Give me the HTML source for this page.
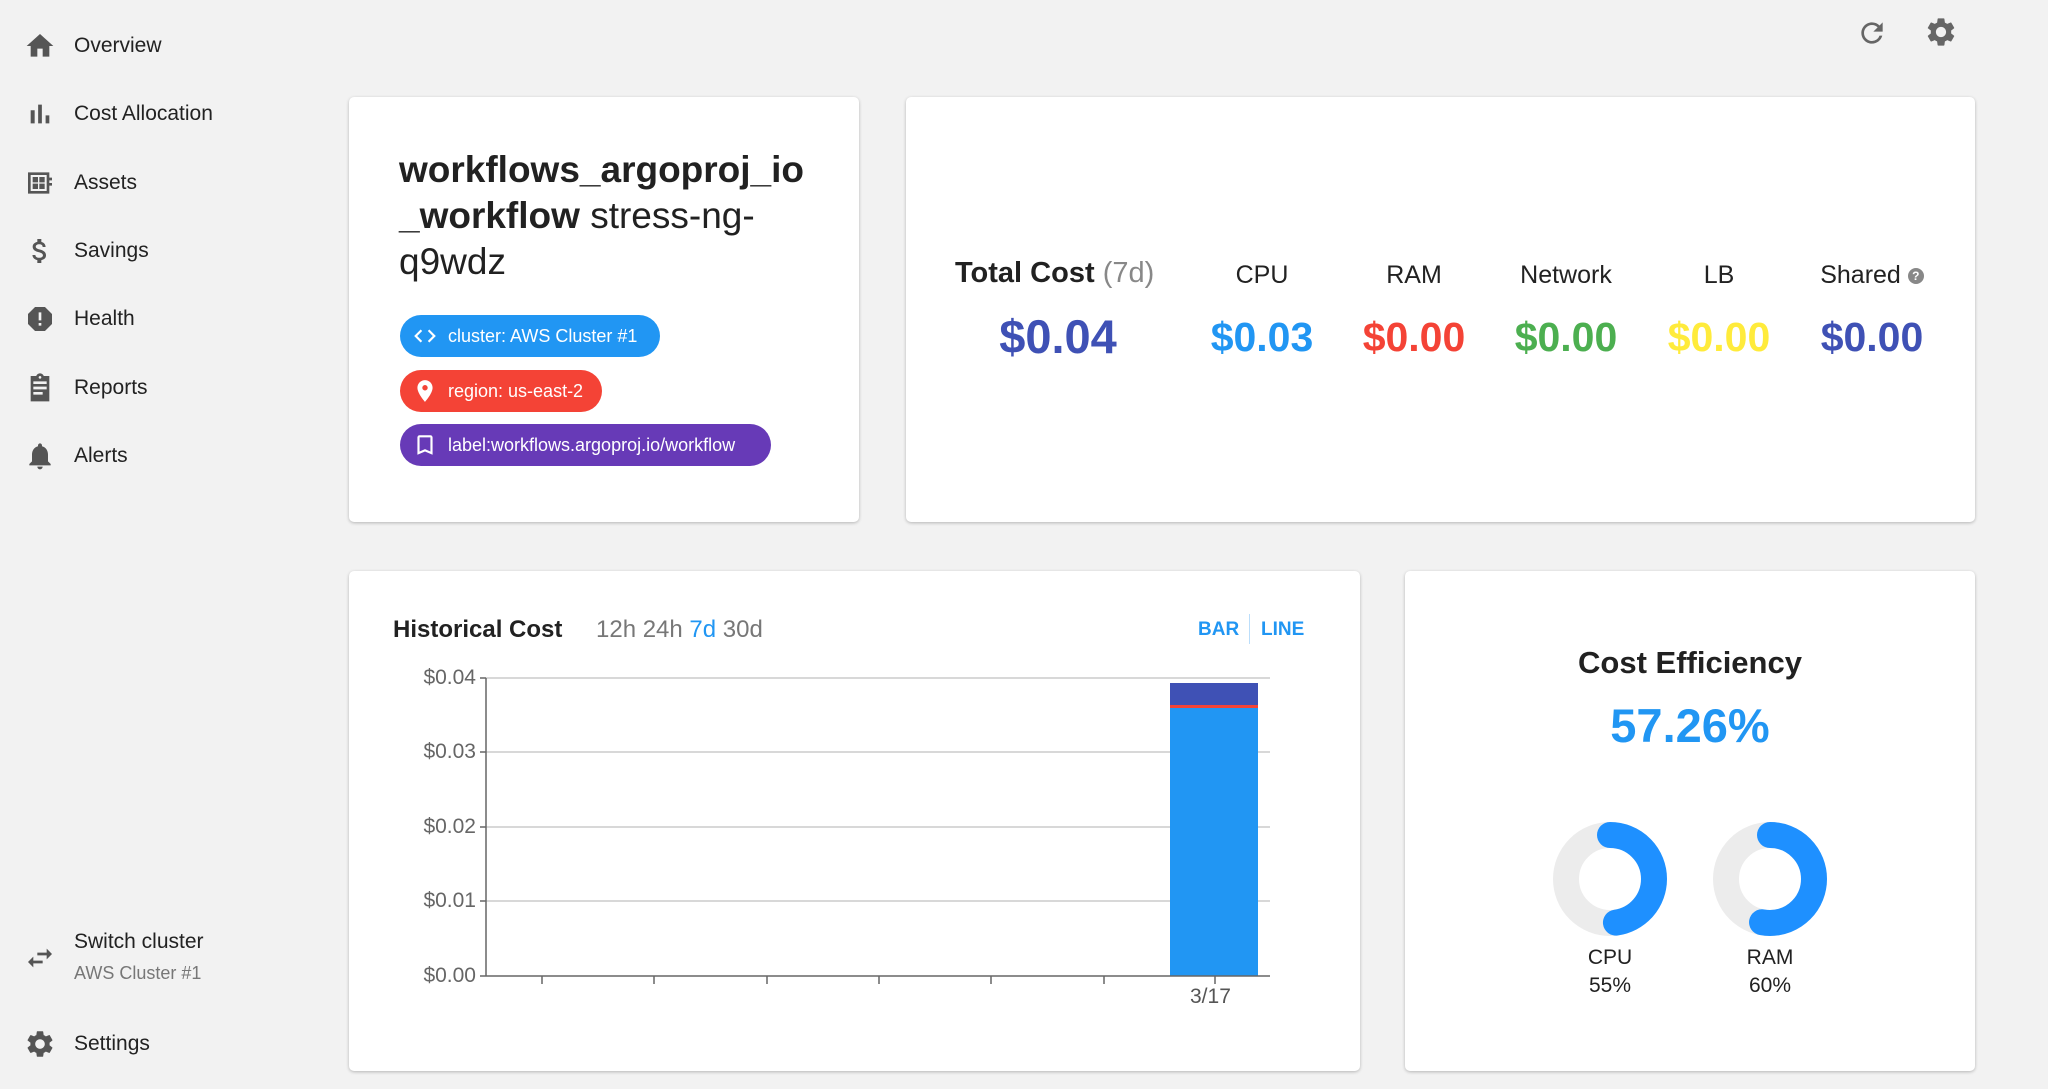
<!DOCTYPE html>
<html><head><meta charset="utf-8"><style>
*{margin:0;padding:0;box-sizing:border-box}
body{width:2048px;height:1089px;background:#f2f2f2;font-family:"Liberation Sans",Arial,sans-serif;color:#212121;position:relative;overflow:hidden}
.a{position:absolute;white-space:nowrap}
.nav{position:absolute;left:0;width:300px;height:40px;display:flex;align-items:center;font-size:21px;color:#222}
.nav svg{position:absolute;left:24px;width:32px;height:32px;fill:#555}
.nav span{position:absolute;left:74px;white-space:nowrap}
.card{position:absolute;background:#fff;border-radius:5px;box-shadow:0 1px 3px rgba(0,0,0,.25)}
.chip{position:absolute;left:400px;height:42px;border-radius:21px;color:#fff;font-size:18px;display:flex;align-items:center;padding-left:48px;white-space:nowrap}
.chip svg{position:absolute;left:12px;width:26px;height:26px}
.col{position:absolute;text-align:center;width:150px}
.col .l{font-size:25px;color:#222}
.col .v{font-size:41px;font-weight:bold;margin-top:24px}
.yl{position:absolute;left:412px;font-size:21px;color:#666;width:64px;text-align:right}
</style></head><body>

<div class="nav" style="top:26px"><svg viewBox="0 0 24 24"><path d="M10 20v-6h4v6h5v-8h3L12 3 2 12h3v8z"/></svg><span>Overview</span></div>
<div class="nav" style="top:94px"><svg viewBox="0 0 24 24"><path d="M5 9.2h3V19H5zM10.6 5h2.8v14h-2.8zm5.6 8H19v6h-2.8z"/></svg><span>Cost Allocation</span></div>
<div class="nav" style="top:163px"><svg viewBox="0 0 24 24"><path d="M3 4h16v16H3zM5 6v12h12V6zM6.5 7.5h4v4h-4zm5 0h4v4h-4zm-5 5h4v4h-4zm5 0h4v4h-4zM19 8h2v2h-2zm0 4h2v2h-2z"/></svg><span>Assets</span></div>
<div class="nav" style="top:231px"><svg viewBox="0 0 24 24"><path d="M11.8 10.9c-2.27-.59-3-1.2-3-2.150 0-1.09 1.01-1.85 2.7-1.85 1.78 0 2.44.85 2.5 2.1h2.21c-.07-1.72-1.12-3.3-3.21-3.81V3h-3v2.16c-1.94.42-3.5 1.68-3.5 3.61 0 2.31 1.91 3.46 4.7 4.13 2.5.6 3 1.48 3 2.41 0 .69-.49 1.790-2.7 1.79-2.06 0-2.87-.92-2.98-2.1h-2.2c.12 2.19 1.76 3.42 3.68 3.83V21h3v-2.15c1.95-.37 3.5-1.5 3.5-3.55 0-2.84-2.43-3.81-4.7-4.4z"/></svg><span>Savings</span></div>
<div class="nav" style="top:299px"><svg viewBox="0 0 24 24"><path d="M15.73 3H8.27L3 8.27v7.46L8.27 21h7.46L21 15.73V8.27zM13 17h-2v-2h2zm0-4h-2V7h2z"/></svg><span>Health</span></div>
<div class="nav" style="top:368px"><svg viewBox="0 0 24 24"><path d="M19 3h-4.18C14.4 1.84 13.3 1 12 1s-2.4.84-2.82 2H5v19h14zM12 3c.55 0 1 .45 1 1s-.45 1-1 1-1-.45-1-1 .45-1 1-1zm2 14H7v-2h7zm3-4H7v-2h10zm0-4H7V7h10z"/></svg><span>Reports</span></div>
<div class="nav" style="top:436px"><svg viewBox="0 0 24 24"><path d="M12 22c1.1 0 2-.9 2-2h-4c0 1.1.9 2 2 2zm6-6v-5c0-3.07-1.63-5.64-4.5-6.32V4c0-.83-.67-1.5-1.5-1.5s-1.5.67-1.5 1.5v.68C7.64 5.36 6 7.92 6 11v5l-2 2v1h16v-1z"/></svg><span>Alerts</span></div>

<svg class="a" style="left:24px;top:942px;width:32px;height:32px;fill:#555" viewBox="0 0 24 24"><path d="M6.99 11L3 15l3.99 4v-3H14v-2H6.99zM21 9l-3.99-4v3H10v2h7.01v3z"/></svg>
<div class="a" style="left:74px;top:930px;font-size:21px;color:#222">Switch cluster</div>
<div class="a" style="left:74px;top:963px;font-size:18px;color:#777">AWS Cluster #1</div>
<div class="nav" style="top:1024px"><svg viewBox="0 0 24 24"><path d="M19.14 12.94c.04-.3.06-.61.06-.94 0-.32-.02-.64-.07-.94l2.03-1.58a.49.49 0 00.12-.61l-1.92-3.32a.488.488 0 00-.59-.22l-2.39.96c-.5-.38-1.03-.7-1.62-.94l-.36-2.54a.484.484 0 00-.48-.41h-3.84c-.24 0-.43.17-.47.41l-.36 2.54c-.59.24-1.13.57-1.62.94l-2.39-.96c-.22-.08-.47 0-.59.22L2.74 8.87c-.12.21-.08.47.12.61l2.03 1.58c-.05.3-.09.63-.09.94s.02.64.07.94l-2.03 1.58a.49.49 0 00-.12.61l1.92 3.32c.12.22.37.29.59.22l2.39-.96c.5.38 1.03.7 1.62.94l.36 2.54c.05.24.24.41.48.41h3.84c.24 0 .44-.17.47-.41l.36-2.54c.59-.24 1.13-.56 1.62-.94l2.39.96c.22.08.47 0 .59-.22l1.92-3.32c.12-.22.07-.47-.12-.61zM12 15.6c-1.98 0-3.6-1.62-3.6-3.6s1.62-3.6 3.6-3.6 3.6 1.62 3.6 3.6-1.62 3.6-3.6 3.6z"/></svg><span>Settings</span></div>

<svg class="a" style="left:1856px;top:17px;width:32px;height:32px;fill:#666" viewBox="0 0 24 24"><path d="M17.65 6.35A7.958 7.958 0 0012 4c-4.42 0-7.99 3.58-7.99 8s3.57 8 7.99 8c3.73 0 6.84-2.55 7.73-6h-2.08A5.99 5.99 0 0112 18c-3.31 0-6-2.69-6-6s2.69-6 6-6c1.66 0 3.14.69 4.22 1.78L13 11h7V4z"/></svg>
<svg class="a" style="left:1924px;top:15px;width:34px;height:34px;fill:#666" viewBox="0 0 24 24"><path d="M19.14 12.94c.04-.3.06-.61.06-.94 0-.32-.02-.64-.07-.94l2.03-1.58a.49.49 0 00.12-.61l-1.92-3.32a.488.488 0 00-.59-.22l-2.39.96c-.5-.38-1.03-.7-1.62-.94l-.36-2.54a.484.484 0 00-.48-.41h-3.84c-.24 0-.43.17-.47.41l-.36 2.54c-.59.24-1.13.57-1.62.94l-2.39-.96c-.22-.08-.47 0-.59.22L2.74 8.87c-.12.21-.08.47.12.61l2.03 1.58c-.05.3-.09.63-.09.94s.02.64.07.94l-2.03 1.58a.49.49 0 00-.12.61l1.92 3.32c.12.22.37.29.59.22l2.39-.96c.5.38 1.03.7 1.62.94l.36 2.54c.05.24.24.41.48.41h3.84c.24 0 .44-.17.47-.41l.36-2.54c.59-.24 1.13-.56 1.62-.94l2.39.96c.22.08.47 0 .59-.22l1.92-3.32c.12-.22.07-.47-.12-.61zM12 15.6c-1.98 0-3.6-1.62-3.6-3.6s1.62-3.6 3.6-3.6 3.6 1.62 3.6 3.6-1.62 3.6-3.6 3.6z"/></svg>

<div class="card" style="left:349px;top:97px;width:510px;height:425px"></div>
<div class="a" style="left:399px;top:147px;font-size:37px;line-height:46px;color:#212121"><b>workflows_argoproj_io</b><br><b>_workflow</b> stress-ng-<br>q9wdz</div>
<div class="chip" style="top:315px;width:260px;background:#2196f3"><svg viewBox="0 0 24 24" fill="#fff"><path d="M9.4 16.6L4.8 12l4.6-4.6L8 6l-6 6 6 6zm5.2 0l4.6-4.6-4.6-4.6L16 6l6 6-6 6z"/></svg>cluster: AWS Cluster #1</div>
<div class="chip" style="top:370px;width:202px;background:#f44336"><svg viewBox="0 0 24 24" fill="#fff"><path d="M12 2C8.13 2 5 5.13 5 9c0 5.25 7 13 7 13s7-7.75 7-13c0-3.87-3.13-7-7-7zm0 9.5a2.5 2.5 0 010-5 2.5 2.5 0 010 5z"/></svg>region: us-east-2</div>
<div class="chip" style="top:424px;width:371px;background:#673ab7"><svg viewBox="0 0 24 24" fill="#fff"><path d="M17 3H7c-1.1 0-2 .9-2 2v16l7-3 7 3V5c0-1.1-.9-2-2-2zm0 15l-5-2.18L7 18V5h10z"/></svg>label:workflows.argoproj.io/workflow</div>

<div class="card" style="left:906px;top:97px;width:1069px;height:425px"></div>
<div class="a" style="left:955px;top:257px;font-size:29px"><b>Total Cost</b> <span style="color:#888">(7d)</span></div>
<div class="a" style="left:958px;top:309px;width:200px;text-align:center;font-size:47px;font-weight:bold;color:#3f51b5">$0.04</div>
<div class="col" style="left:1187px;top:261px"><div class="l">CPU</div><div class="v" style="color:#2196f3">$0.03</div></div>
<div class="col" style="left:1339px;top:261px"><div class="l">RAM</div><div class="v" style="color:#f44336">$0.00</div></div>
<div class="col" style="left:1491px;top:261px"><div class="l">Network</div><div class="v" style="color:#4caf50">$0.00</div></div>
<div class="col" style="left:1644px;top:261px"><div class="l">LB</div><div class="v" style="color:#ffeb3b">$0.00</div></div>
<div class="col" style="left:1797px;top:261px"><div class="l">Shared <span style="display:inline-block;width:16px;height:16px;border-radius:50%;background:#888;color:#fff;font-size:12px;line-height:16px;vertical-align:3px;font-weight:bold">?</span></div><div class="v" style="color:#3f51b5">$0.00</div></div>

<div class="card" style="left:349px;top:571px;width:1011px;height:500px"></div>
<div class="a" style="left:393px;top:616px;font-size:24px;font-weight:bold">Historical Cost</div>
<div class="a" style="left:596px;top:616px;font-size:24px;color:#777">12h 24h <span style="color:#2196f3">7d</span> 30d</div>
<div class="a" style="left:1198px;top:619px;font-size:19px;color:#2196f3;font-weight:bold">BAR</div>
<div class="a" style="left:1249px;top:614px;width:1px;height:30px;background:#bbdefb"></div>
<div class="a" style="left:1261px;top:619px;font-size:19px;color:#2196f3;font-weight:bold">LINE</div>
<svg class="a" style="left:0;top:0" width="2048" height="1089">
<g stroke="#ccc" stroke-width="1.5"><line x1="486" y1="678" x2="1270" y2="678"/><line x1="486" y1="752" x2="1270" y2="752"/><line x1="486" y1="827" x2="1270" y2="827"/><line x1="486" y1="901" x2="1270" y2="901"/></g>
<rect x="1170" y="683" width="88" height="293" fill="#2196f3"/>
<rect x="1170" y="683" width="88" height="22" fill="#3f51b5"/>
<rect x="1170" y="705" width="88" height="3" fill="#f44336"/>
<g stroke="#666" stroke-width="1.5"><line x1="486" y1="678" x2="486" y2="976"/><line x1="480" y1="976" x2="1270" y2="976"/>
<line x1="480" y1="678" x2="486" y2="678"/><line x1="480" y1="752" x2="486" y2="752"/><line x1="480" y1="827" x2="486" y2="827"/><line x1="480" y1="901" x2="486" y2="901"/>
<line x1="542" y1="976" x2="542" y2="984"/><line x1="654" y1="976" x2="654" y2="984"/><line x1="767" y1="976" x2="767" y2="984"/><line x1="879" y1="976" x2="879" y2="984"/><line x1="991" y1="976" x2="991" y2="984"/><line x1="1104" y1="976" x2="1104" y2="984"/><line x1="1215" y1="976" x2="1215" y2="984"/></g>
</svg>
<div class="yl" style="top:666px">$0.04</div>
<div class="yl" style="top:740px">$0.03</div>
<div class="yl" style="top:815px">$0.02</div>
<div class="yl" style="top:889px">$0.01</div>
<div class="yl" style="top:964px">$0.00</div>
<div class="a" style="left:1190px;top:985px;font-size:21px;color:#555">3/17</div>

<div class="card" style="left:1405px;top:571px;width:570px;height:500px"></div>
<div class="a" style="left:1490px;top:645px;width:400px;text-align:center;font-size:31px;font-weight:bold">Cost Efficiency</div>
<div class="a" style="left:1490px;top:698px;width:400px;text-align:center;font-size:47px;font-weight:bold;color:#2196f3">57.26%</div>
<svg class="a" style="left:0;top:0" width="2048" height="1089">
<circle cx="1610" cy="879" r="44" fill="none" stroke="#ececec" stroke-width="26"/>
<circle cx="1610" cy="879" r="44" fill="none" stroke="#1e90ff" stroke-width="26" stroke-linecap="round" stroke-dasharray="132 400" transform="rotate(-90 1610 879)"/>
<circle cx="1770" cy="879" r="44" fill="none" stroke="#ececec" stroke-width="26"/>
<circle cx="1770" cy="879" r="44" fill="none" stroke="#1e90ff" stroke-width="26" stroke-linecap="round" stroke-dasharray="146 400" transform="rotate(-90 1770 879)"/>
</svg>
<div class="a" style="left:1560px;top:944px;width:100px;text-align:center;font-size:21px;line-height:28px">CPU<br>55%</div>
<div class="a" style="left:1720px;top:944px;width:100px;text-align:center;font-size:21px;line-height:28px">RAM<br>60%</div>
</body></html>
